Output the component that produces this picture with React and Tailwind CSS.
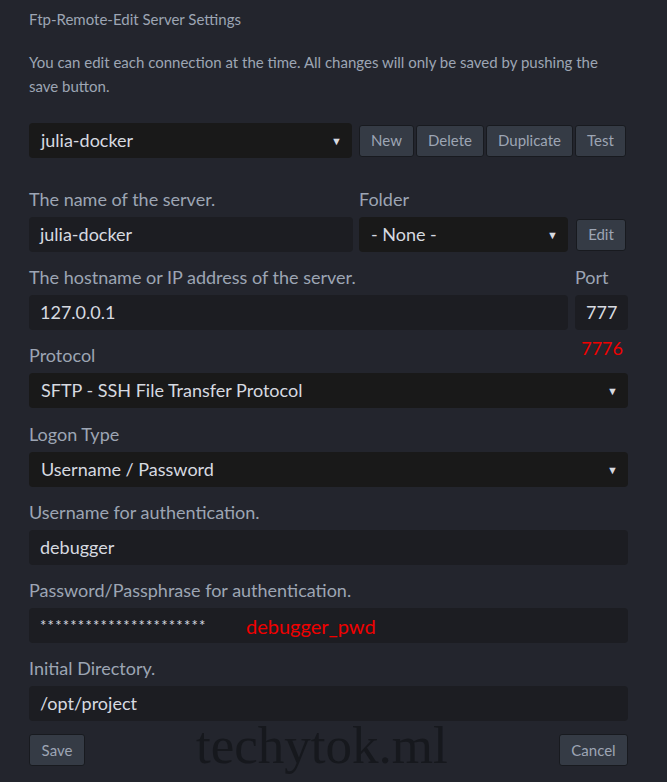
import React from 'react';

const font = { fontFamily: 'Lato, "Noto Sans", sans-serif' };

const Caret = () => (
  <span className="absolute right-[10px] top-1/2 -translate-y-1/2 text-[11px] text-[#d7dae0]">▼</span>
);

const Select = ({ value, className = '' }) => (
  <div className={`relative h-[35px] rounded-[4px] bg-[#191919] flex items-center pl-3 text-[18px] text-[#d7dae0] ${className}`}>
    {value}
    <Caret />
  </div>
);

const Input = ({ children, className = '' }) => (
  <div className={`h-[35px] rounded-[4px] bg-[#1c1d22] flex items-center pl-[11px] text-[18px] text-[#d7dae0] ${className}`}>
    {children}
  </div>
);

const Btn = ({ label, className = '' }) => (
  <button className={`h-[32px] shrink-0 rounded-[3px] border border-[#181a1f] bg-[#353b45] text-[15px] text-[#9da5b4] ${className}`}>
    {label}
  </button>
);

const Label = ({ children, className = '' }) => (
  <div className={`h-[24px] leading-[24px] text-[18px] text-[#9da5b4] ${className}`}>{children}</div>
);

export default function App() {
  return (
    <div className="relative w-[667px] h-[782px] bg-[#23252d] overflow-hidden" style={font}>
      <div className="pl-[29px] pr-[39px] pt-[8px]">
        <div className="h-[22px] leading-[22px] text-[15px] text-[#9da5b4]">Ftp-Remote-Edit Server Settings</div>
        <p className="mt-[20px] text-[15px] leading-[24px] text-[#9da5b4]">
          You can edit each connection at the time. All changes will only be saved by pushing the save button.
        </p>

        <div className="mt-[25px] flex items-center">
          <Select value="julia-docker" className="w-[323px] shrink-0" />
          <div className="ml-[7px] flex gap-[2px]">
            <Btn label="New" className="w-[55px]" />
            <Btn label="Delete" className="w-[68px]" />
            <Btn label="Duplicate" className="w-[87px]" />
            <Btn label="Test" className="w-[51px]" />
          </div>
        </div>

        <div className="mt-[29px] flex gap-[6px]">
          <div className="w-[324px]">
            <Label>The name of the server.</Label>
            <Input className="mt-[6px]">julia-docker</Input>
          </div>
          <div className="flex-1">
            <Label>Folder</Label>
            <div className="mt-[6px] pr-[2px] flex items-center gap-[8px]">
              <Select value="- None -" className="flex-1" />
              <Btn label="Edit" className="w-[50px]" />
            </div>
          </div>
        </div>

        <div className="mt-[13px] flex gap-[7px]">
          <div className="flex-1">
            <Label>The hostname or IP address of the server.</Label>
            <Input className="mt-[6px]">127.0.0.1</Input>
          </div>
          <div className="w-[53px]">
            <Label>Port</Label>
            <Input className="mt-[6px] pl-[8px]">777</Input>
          </div>
        </div>

        <div className="relative pt-[13px]">
          <span className="absolute right-[5px] top-[6px] leading-[24px] text-[18px] text-[#f00000]">7776</span>
          <Label>Protocol</Label>
          <Select value="SFTP - SSH File Transfer Protocol" className="mt-[6px]" />
        </div>

        <Label className="mt-[14px]">Logon Type</Label>
        <Select value="Username / Password" className="mt-[6px]" />

        <Label className="mt-[13px]">Username for authentication.</Label>
        <Input className="mt-[6px]">debugger</Input>

        <Label className="mt-[13px]">Password/Passphrase for authentication.</Label>
        <Input className="mt-[6px]">
          <span className="w-[206px] text-[15px] tracking-[1.2px]">**********************</span>
          <span className="text-[20px] text-[#f00000]">debugger_pwd</span>
        </Input>

        <Label className="mt-[13px]">Initial Directory.</Label>
        <Input className="mt-[6px]">/opt/project</Input>

        <div className="mt-[13px] flex justify-between">
          <Btn label="Save" className="w-[56px]" />
          <Btn label="Cancel" className="w-[69px]" />
        </div>
      </div>

      <div
        className="absolute left-[196px] top-[719px] text-[53px] leading-[53px] text-[#16181d] pointer-events-none"
        style={{ fontFamily: '"Liberation Serif", serif' }}
      >
        techytok.ml
      </div>
    </div>
  );
}
